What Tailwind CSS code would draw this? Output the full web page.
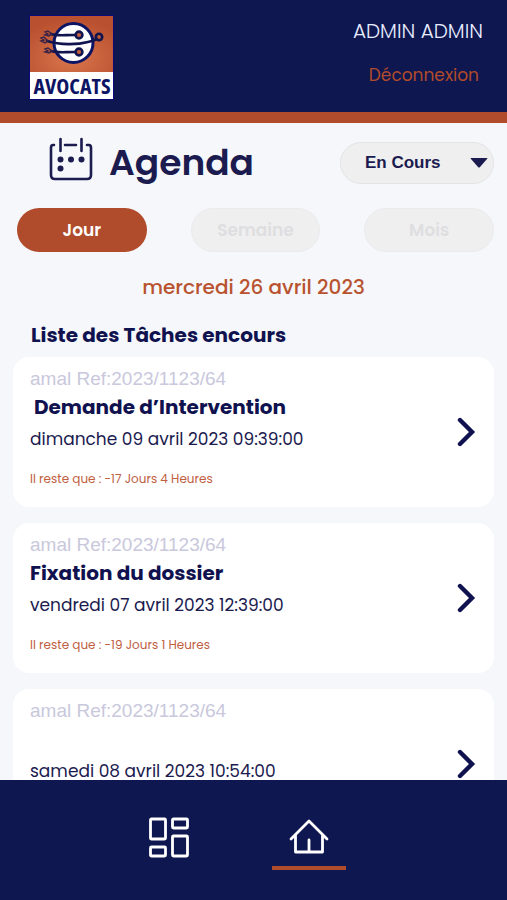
<!DOCTYPE html>
<html lang="fr">
<head>
    <meta charset="UTF-8">
    <meta name="viewport" content="width=device-width, initial-scale=1.0">
    <title>Agenda</title>
    <script src="https://cdn.jsdelivr.net/npm/@tailwindcss/browser@4"></script>
</head>
<body class="h-screen flex flex-col overflow-hidden bg-[#f5f7fb] text-[#1b1b4f] font-[Poppins,Inter,sans-serif]">
    <!-- Header -->
    <header class="shrink-0 flex justify-between items-start bg-[#0e174f] border-b-[11px] border-[#b04b2b] pl-[29px] pr-6 pt-[15px] pb-3">
        <svg class="w-[85px] h-[85px]" viewBox="0 0 85 85" role="img" aria-label="Avocats">
            <defs>
                <radialGradient id="glow" cx="50%" cy="75%" r="70%">
                    <stop offset="0" stop-color="#d9764d" />
                    <stop offset="1" stop-color="#b9502f" />
                </radialGradient>
            </defs>
            <rect width="85" height="85" fill="#0b0b78" />
            <rect x="1" y="1" width="83" height="56" fill="url(#glow)" />
            <rect x="1" y="57" width="83" height="27" fill="#fff" />
            <circle cx="44.500" cy="28" r="19.500" fill="#fff" stroke="#0c1464" stroke-width="3" />
            <g fill="none" stroke="#10154f" stroke-width="2.6" stroke-linecap="round">
                <path d="M22 19c5 2 12 1 24 1" />
                <path d="M18 26c13 4 30 4 41 1 5-1 7-2 9-3" />
                <path d="M22 36c6 2 12 1 24 1" />
                <circle cx="70" cy="22" r="3.2" />
            </g>
            <g fill="#c4613f" stroke="#10154f" stroke-width="2.6">
                <circle cx="50" cy="20" r="3.4" />
                <circle cx="50" cy="37" r="3.4" />
            </g>
            <g fill="none" stroke="#3a2347" stroke-width="1.4">
                <path d="M23 19l-4-3-3 1 3 2-3 1 4 1z" />
                <path d="M19 26l-4-4-3 1 3 2-3 1 4 2z" />
                <path d="M23 36l-4-3-3 1 3 2-3 1 4 1z" />
            </g>
            <text x="43" y="79" text-anchor="middle" font-family="Open Sans, sans-serif" font-stretch="condensed" font-weight="700" font-size="22" fill="#0e1464">AVOCATS</text>
        </svg>
        <div class="flex flex-col items-end gap-4">
            <p class="text-[20px] leading-8 font-light text-[#e8ecff]">ADMIN ADMIN</p>
            <a href="#" class="mr-1 text-[17px] leading-6 text-[#b04b2b]">Déconnexion</a>
        </div>
    </header>

    <main class="flex-1 min-h-0 overflow-hidden px-[13px]">
        <!-- Title and filter -->
        <div class="flex items-center justify-between pt-[15px] pl-9">
            <div class="flex items-center gap-4">
                <svg class="w-[44px] h-[44px] -mt-2" viewBox="0 0 44 44" fill="none" stroke="#1b1b4f" stroke-width="2.6" stroke-linecap="round">
                    <path d="M5 8H4Q2 8 2 11V38Q2 42 6 42H38Q42 42 42 38V11Q42 8 40 8H38M16 8H27M11.500 2V14M32.500 2V14" />
                    <g fill="#1b1b4f" stroke="none">
                        <circle cx="11.500" cy="22.500" r="3" />
                        <circle cx="22" cy="22.500" r="3" />
                        <circle cx="32.500" cy="22.500" r="3" />
                        <circle cx="11.500" cy="31.500" r="3" />
                    </g>
                </svg>
                <h1 class="text-[36px] leading-[50px] font-semibold">Agenda</h1>
            </div>
            <div class="relative w-[154px]">
                <select aria-label="Filtre" class="appearance-none w-full h-[42px] rounded-full border border-[#e4e4e6] bg-[#efeff0] pl-6 pr-8 text-[17px] font-bold font-[Liberation_Sans,sans-serif]">
                    <option>En Cours</option>
                </select>
                <svg class="absolute right-[6px] top-4 w-[18px] h-[10px] pointer-events-none" viewBox="0 0 18 10"><path d="M1 0H17Q18 0 17 1L10 9Q9 10 8 9L1 1Q0 0 1 0Z" fill="#1b1b4f" /></svg>
            </div>
        </div>

        <!-- Period tabs -->
        <div class="grid grid-cols-3 gap-11 mt-5 pl-1 font-semibold text-[17px]">
            <button class="h-11 pt-0.5 rounded-full bg-[#b04b2b] text-white">Jour</button>
            <button class="h-11 pt-0.5 rounded-full bg-[#efeff0] border border-[#ebebed] text-[#dedee0]">Semaine</button>
            <button class="h-11 pt-0.5 rounded-full bg-[#efeff0] border border-[#ebebed] text-[#dedee0]">Mois</button>
        </div>

        <p class="mt-[21px] text-center text-[20px] leading-7 font-medium text-[#b9532f]">mercredi 26 avril 2023</p>
        <h2 class="mt-5 mb-2 pl-[18px] text-[20px] leading-7 font-bold text-[#10124f]">Liste des Tâches encours</h2>

        <!-- Tasks -->
        <ul class="flex flex-col gap-4">
            <li class="flex items-center justify-between h-[150px] shrink-0 rounded-2xl bg-white pl-[17px] pr-[18px]">
                <div class="pb-2.5">
                    <p class="text-[19px] leading-7 text-[#c9c8dc] font-[Liberation_Sans,sans-serif]">amal Ref:2023/1123/64</p>
                    <h3 class="h-7 pl-1 text-[20px] leading-7 font-bold text-[#10124f]">Demande d’Intervention</h3>
                    <p class="mt-1 text-[17px] leading-7">dimanche 09 avril 2023 09:39:00</p>
                    <p class="mt-4 text-[12px] leading-5 text-[#c0603f]">Il reste que : -17 Jours 4 Heures</p>
                </div>
                <svg class="w-[20px] h-[30px]" viewBox="0 0 20 30" fill="none" stroke="#10124f" stroke-width="4.4" stroke-linecap="round"><path d="M4 3L16 15L4 27" /></svg>
            </li>
            <li class="flex items-center justify-between h-[150px] shrink-0 rounded-2xl bg-white pl-[17px] pr-[18px]">
                <div class="pb-2.5">
                    <p class="text-[19px] leading-7 text-[#c9c8dc] font-[Liberation_Sans,sans-serif]">amal Ref:2023/1123/64</p>
                    <h3 class="h-7 text-[20px] leading-7 font-bold text-[#10124f]">Fixation du dossier</h3>
                    <p class="mt-1 text-[17px] leading-7">vendredi 07 avril 2023 12:39:00</p>
                    <p class="mt-4 text-[12px] leading-5 text-[#c0603f]">Il reste que : -19 Jours 1 Heures</p>
                </div>
                <svg class="w-[20px] h-[30px]" viewBox="0 0 20 30" fill="none" stroke="#10124f" stroke-width="4.4" stroke-linecap="round"><path d="M4 3L16 15L4 27" /></svg>
            </li>
            <li class="flex items-center justify-between h-[150px] shrink-0 rounded-2xl bg-white pl-[17px] pr-[18px]">
                <div class="pb-2.5">
                    <p class="text-[19px] leading-7 text-[#c9c8dc] font-[Liberation_Sans,sans-serif]">amal Ref:2023/1123/64</p>
                    <h3 class="h-7"></h3>
                    <p class="mt-1 text-[17px] leading-7">samedi 08 avril 2023 10:54:00</p>
                    <p class="mt-4 h-5"></p>
                </div>
                <svg class="w-[20px] h-[30px]" viewBox="0 0 20 30" fill="none" stroke="#10124f" stroke-width="4.4" stroke-linecap="round"><path d="M4 3L16 15L4 27" /></svg>
            </li>
        </ul>
    </main>

    <!-- Bottom navigation -->
    <nav class="shrink-0 h-[120px] flex justify-center items-start gap-[66px] bg-[#0e174f] pt-9 pr-[30px]">
        <a href="#" aria-label="Tableau de bord" class="w-[74px] flex justify-center">
            <svg class="w-[42px] h-[42px]" viewBox="0 0 42 42" fill="none" stroke="#fff" stroke-width="2.800" stroke-linejoin="round">
                <rect x="2.500" y="3" width="15" height="20" rx="1" />
                <rect x="24.500" y="3" width="15" height="9" rx="1" />
                <rect x="2.500" y="31" width="15" height="9" rx="1" />
                <rect x="24.500" y="20" width="15" height="20" rx="1" />
            </svg>
        </a>
        <a href="#" aria-label="Accueil" class="w-[74px] h-[54px] flex justify-center border-b-4 border-[#b04b2b]">
            <svg class="w-[42px] h-[42px]" viewBox="0 0 42 42" fill="none" stroke="#fff" stroke-width="2.800" stroke-linecap="round" stroke-linejoin="round">
                <path d="M3 23L21 5L39 23M7.500 19V36H34.500V19M21 24V36" />
            </svg>
        </a>
    </nav>
</body>
</html>
